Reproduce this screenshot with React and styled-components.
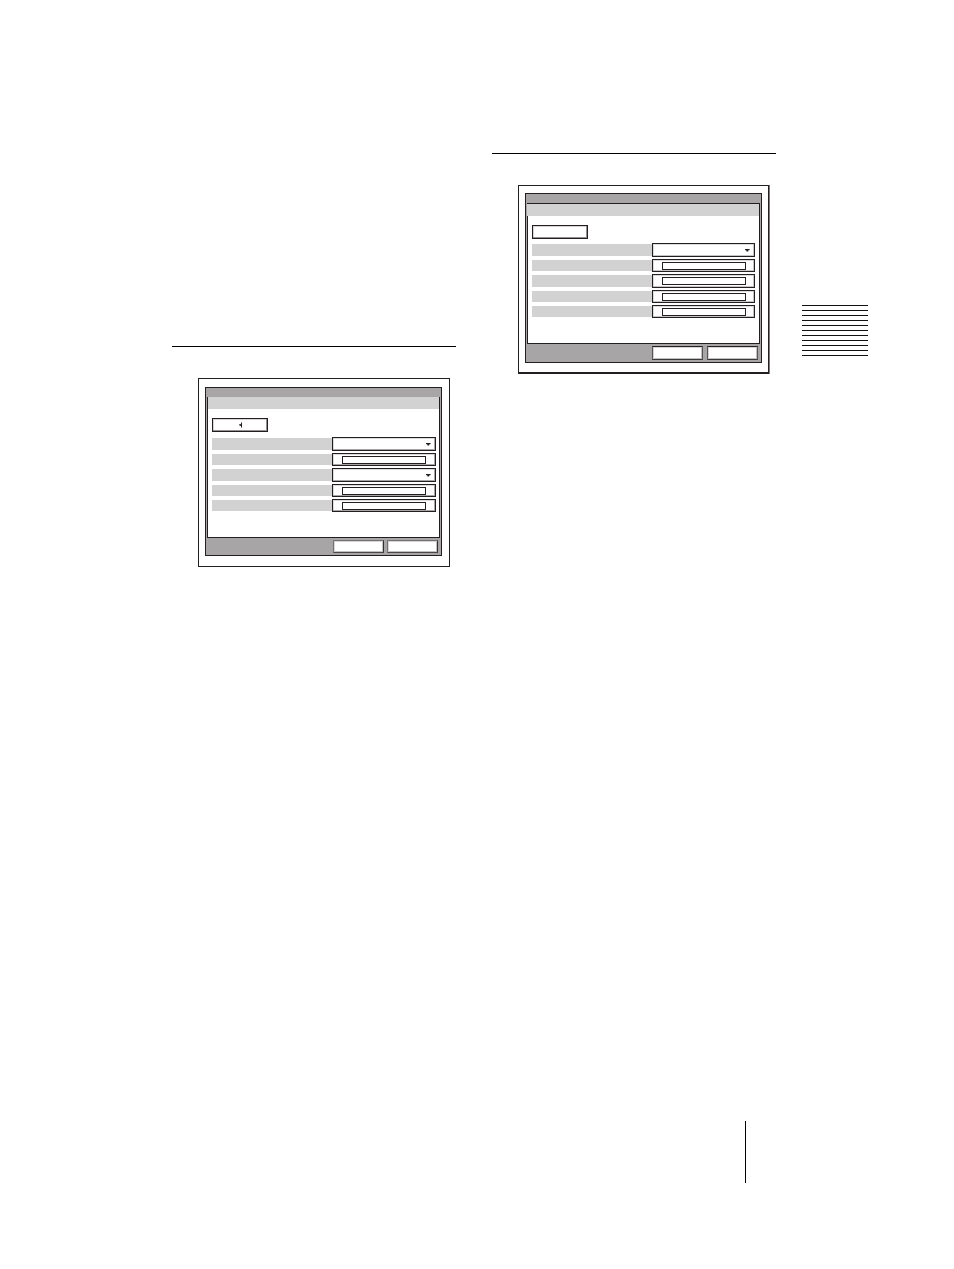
import styled, { createGlobalStyle } from "styled-components";

const ink = "#231f20";
const midGray = "#a7a5a6";
const lightGray = "#d2d2d2";

const GlobalStyle = createGlobalStyle`
  * {
    box-sizing: border-box;
  }

  body {
    margin: 0;
    background: #fff;
    font-family: "Liberation Sans", sans-serif;
    font-size: 8px;
  }
`;

const Page = styled.div`
  min-height: 100vh;
  display: flex;
  flex-direction: column;
  padding: 153px 86px 86px 172px;
`;

const Content = styled.div`
  display: grid;
  grid-template-columns: minmax(0, 1fr) 66px;
  gap: 26px;
  align-items: start;
`;

const Columns = styled.main`
  display: grid;
  grid-template-columns: 1fr 1fr;
  gap: 36px;
  align-items: start;
`;

const Section = styled.section`
  border-top: 1px solid #000;
  padding-top: 31px;
  margin-top: ${(props) => (props.$low ? "193px" : "0")};
`;

const Frame = styled.div`
  margin-left: 26px;
  margin-right: ${(props) => (props.$raised ? "7px" : "6px")};
  padding: ${(props) => (props.$raised ? "7px 6px 9px" : "8px 7px 10px 6px")};
  border: 1px solid ${ink};
  border-bottom-width: ${(props) => (props.$raised ? "2px" : "1px")};
  box-shadow: ${(props) => (props.$raised ? "1px 0 0 #7b797a" : "none")};
`;

const Screen = styled.form`
  border: 1px solid ${ink};
  background: ${midGray};
  padding: 9px 1px 0;
`;

const Panel = styled.div`
  background: #fff;
  border: 1px solid ${ink};
  border-top-width: ${(props) => (props.$raised ? "1px" : "0")};
`;

const PanelHeader = styled.header`
  height: 12px;
  background: ${lightGray};
  margin-left: ${(props) => (props.$raised ? "-1px" : "0")};
`;

const PanelBody = styled.div`
  padding: 9px ${(props) => (props.$raised ? "4px" : "3px")} 25px 4px;
`;

const Button = styled.button`
  display: flex;
  align-items: center;
  justify-content: center;
  padding: 0;
  background: #fff;
  border: 1px solid ${ink};
  border-radius: 0;
`;

const BackButton = styled(Button)`
  width: 56px;
  height: 14px;
  padding-left: 2px;
  box-shadow: inset -1px -1px 0 #929091, inset 1px 1px 0 #d6d4d5;
`;

const Rows = styled.div`
  display: flex;
  flex-direction: column;
  gap: 2px;
  margin-top: ${(props) => (props.$raised ? "4px" : "5px")};
`;

const Row = styled.div`
  display: grid;
  grid-template-columns: 120px minmax(0, 1fr);
  height: ${(props) => (props.$tall ? "14px" : "13px")};
`;

const Label = styled.label`
  margin: 1px 0;
  background: ${lightGray};
`;

const Control = styled.div`
  position: relative;
  display: flex;
  border: 1px solid ${ink};
  padding: ${(props) =>
    props.$select ? "0" : props.$raised ? "2px 8px 0 9px" : "2px 9px 0"};
  box-shadow: inset -1px -1px 0 ${(props) => (props.$raised ? "#c5c3c4" : "#a7a5a6")},
    inset 1px 1px 0 #dddcdc;
`;

const Select = styled.select`
  flex: 1;
  min-width: 0;
  appearance: none;
  border: 0;
  border-radius: 0;
  padding: 0 12px 0 4px;
  background: transparent;
  font: inherit;
`;

const Arrow = styled.svg`
  position: absolute;
  top: 5px;
  right: 4px;
  pointer-events: none;
`;

const Input = styled.input`
  flex: 1;
  min-width: 0;
  height: 8px;
  padding: 0 2px;
  border: 1px solid ${ink};
  border-radius: 0;
  background: #fff;
  font: inherit;
  line-height: 6px;
`;

const Actions = styled.footer`
  display: flex;
  justify-content: flex-end;
  gap: ${(props) => (props.$raised ? "4px" : "3px")};
  padding: 2px;
`;

const ActionButton = styled(Button)`
  width: 51px;
  height: ${(props) => (props.$raised ? "14px" : "13px")};
  border-color: ${(props) => (props.$raised ? "#231f20 #555354 #3b3839" : "#747273 #343132 #4b4849 #747273")};
  box-shadow: inset 1px 1px 0 #d6d4d5, inset -1px -1px 0 #c1bfc0;
`;

const Stripes = styled.div`
  display: flex;
  flex-direction: column;
  gap: 4px;
  margin-top: 152px;
`;

const Stripe = styled.div`
  height: 1px;
  background: #111;
`;

const PageFooter = styled.footer`
  width: 123px;
  height: 62px;
  margin-top: auto;
  margin-left: auto;
  border-left: 1px solid #000;
`;

const leftRows = ["select", "input", "select", "input", "input"];
const rightRows = ["select", "input", "input", "input", "input"];

const SettingsScreen = ({ name, rows, raised, back }) => (
  <Frame $raised={raised}>
    <Screen onSubmit={(e) => e.preventDefault()}>
      <Panel $raised={raised}>
        <PanelHeader $raised={raised} />
        <PanelBody $raised={raised}>
          <BackButton type="button" aria-label="Back">
            {back && (
              <svg width="4" height="6" viewBox="0 0 4 6">
                <path d="M3 0.5V5.5H2V4L0 3.3V2.5L2 2V0.5Z" fill={ink} />
              </svg>
            )}
          </BackButton>
          <Rows $raised={raised}>
            {rows.map((type, i) => {
              const id = `${name}-${i}`;
              return (
                <Row key={id} $tall={i % 2 === 0 && i < 4}>
                  <Label htmlFor={id} />
                  <Control $select={type === "select"} $raised={raised}>
                    {type === "select" ? (
                      <>
                        <Select id={id} aria-label={`Option ${i + 1}`} />
                        <Arrow width="5" height="4" viewBox="0 0 5 4">
                          <path d="M0 0H4.6V1L3.2 1.6V2.6H1.4V1.6L0 1Z" fill={ink} />
                        </Arrow>
                      </>
                    ) : (
                      <Input id={id} aria-label={`Value ${i + 1}`} />
                    )}
                  </Control>
                </Row>
              );
            })}
          </Rows>
        </PanelBody>
      </Panel>
      <Actions $raised={raised}>
        <ActionButton type="submit" aria-label="Apply" $raised={raised} />
        <ActionButton type="reset" aria-label="Cancel" $raised={raised} />
      </Actions>
    </Screen>
  </Frame>
);

export default function App() {
  return (
    <>
      <GlobalStyle />
      <Page>
        <Content>
          <Columns>
            <Section $low>
              <SettingsScreen name="left" rows={leftRows} back />
            </Section>
            <Section>
              <SettingsScreen name="right" rows={rightRows} raised />
            </Section>
          </Columns>
          <Stripes>
            {Array.from({ length: 11 }, (_, i) => (
              <Stripe key={i} />
            ))}
          </Stripes>
        </Content>
        <PageFooter />
      </Page>
    </>
  );
}
